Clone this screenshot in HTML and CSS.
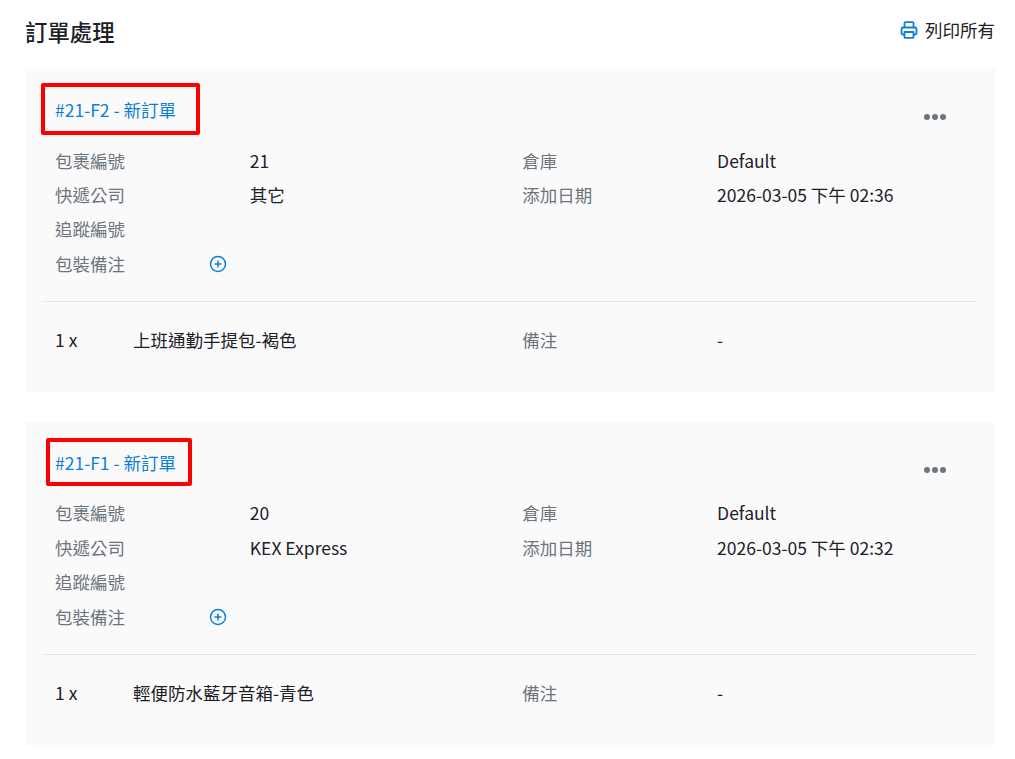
FILE: index.html
```html
<!DOCTYPE html>
<html lang="zh-Hant">
<head>
<meta charset="utf-8">
<title>訂單處理</title>
<link rel="stylesheet" href="styles.css">
</head>
<body>
<header class="top">
  <h1 class="title">訂單處理</h1>
  <a class="print">
    <svg class="print-icon" viewBox="0 0 18 18" fill="none" stroke="#0b7fd8" stroke-width="1.800" stroke-linejoin="round"><path d="M4.500 6.500V2.200a1 1 0 0 1 1-1h7a1 1 0 0 1 1 1v4.300"/><path d="M4.500 13.500H3a1.500 1.500 0 0 1-1.500-1.500V8A1.500 1.500 0 0 1 3 6.500h12A1.500 1.500 0 0 1 16.500 8v4a1.500 1.500 0 0 1-1.500 1.500h-1.500"/><path d="M4.500 11h9v5a.8.8 0 0 1-.8.8H5.300a.8.8 0 0 1-.8-.8z"/></svg>
    <span>列印所有</span>
  </a>
</header>

<section class="card">
  <div class="card-head">
    <a class="order-link">#21-F2 - 新訂單</a>
    <span class="mark mark-a"></span>
    <span class="more"><i></i><i></i><i></i></span>
  </div>
  <div class="info">
    <div class="row"><span class="label">包裹編號</span><span class="value">21</span><span class="label">倉庫</span><span class="value">Default</span></div>
    <div class="row"><span class="label">快遞公司</span><span class="value">其它</span><span class="label">添加日期</span><span class="value">2026-03-05 下午 02:36</span></div>
    <div class="row"><span class="label">追蹤編號</span></div>
    <div class="row"><span class="label">包裝備注</span><span class="value"><svg class="plus" viewBox="0 0 18 18" fill="none" stroke="#0b7fd8" stroke-width="1.500"><circle cx="9" cy="9" r="7.500"/><path d="M5.500 9h7M9 5.500v7"/></svg></span></div>
  </div>
  <div class="item">
    <span class="qty">1 x</span><span class="name">上班通勤手提包-褐色</span><span class="label">備注</span><span class="value">-</span>
  </div>
</section>

<section class="card">
  <div class="card-head">
    <a class="order-link">#21-F1 - 新訂單</a>
    <span class="mark mark-b"></span>
    <span class="more"><i></i><i></i><i></i></span>
  </div>
  <div class="info">
    <div class="row"><span class="label">包裹編號</span><span class="value">20</span><span class="label">倉庫</span><span class="value">Default</span></div>
    <div class="row"><span class="label">快遞公司</span><span class="value">KEX Express</span><span class="label">添加日期</span><span class="value">2026-03-05 下午 02:32</span></div>
    <div class="row"><span class="label">追蹤編號</span></div>
    <div class="row"><span class="label">包裝備注</span><span class="value"><svg class="plus" viewBox="0 0 18 18" fill="none" stroke="#0b7fd8" stroke-width="1.500"><circle cx="9" cy="9" r="7.500"/><path d="M5.500 9h7M9 5.500v7"/></svg></span></div>
  </div>
  <div class="item">
    <span class="qty">1 x</span><span class="name">輕便防水藍牙音箱-青色</span><span class="label">備注</span><span class="value">-</span>
  </div>
</section>
</body>
</html>
```
FILE: styles.css
```css
* { box-sizing: border-box; }
html, body { margin: 0; }
body {
  background: #fff;
  color: #1c2127;
  font-family: "Noto Sans CJK TC", "Noto Sans", sans-serif;
  font-size: 17.5px;
  line-height: 24px;
  padding: 0 20px 0 25px;
}
.top {
  height: 69px;
  display: flex;
  justify-content: space-between;
  align-items: flex-start;
  padding-top: 15px;
}
.title { margin: 0; font-size: 22.400px; line-height: 32px; font-weight: 500; }
.print { display: flex; align-items: center; gap: 7px; padding-top: 3px; }
.print-icon { width: 18px; height: 18px; margin-top: -1px; }
.card {
  background: #fafafa;
  height: 322.800px;
  margin-bottom: 30px;
  padding: 0 18px 0 17px;
}
.card-head {
  position: relative;
  height: 74.400px;
  padding: 29px 0 0 13px;
}
.order-link { color: #0b7fd8; }
.mark { position: absolute; border: 4px solid #f00; border-radius: 2px; }
.mark-a { left: -1px; top: 14px; width: 158.500px; height: 52px; }
.mark-b { left: 4px; top: 16px; width: 145.500px; height: 48px; }
.more { position: absolute; right: 31px; top: 45px; display: flex; gap: 2px; }
.more i { width: 6px; height: 6px; border-radius: 50%; background: #6c757d; }
.info { padding-left: 13px; }
.row {
  display: grid;
  grid-template-columns: 194.800px 272.500px 194.800px 1fr;
  height: 34.400px;
  align-items: center;
}
.label { color: #6c757d; }
.value { display: flex; align-items: center; }
.plus { width: 18px; height: 18px; margin-left: -41px; }
.item {
  display: grid;
  grid-template-columns: 78px 389.300px 194.800px 1fr;
  align-items: center;
  margin-top: 20px;
  padding: 26px 0 0 13px;
  border-top: 1px solid #e6e6e6;
}
```
